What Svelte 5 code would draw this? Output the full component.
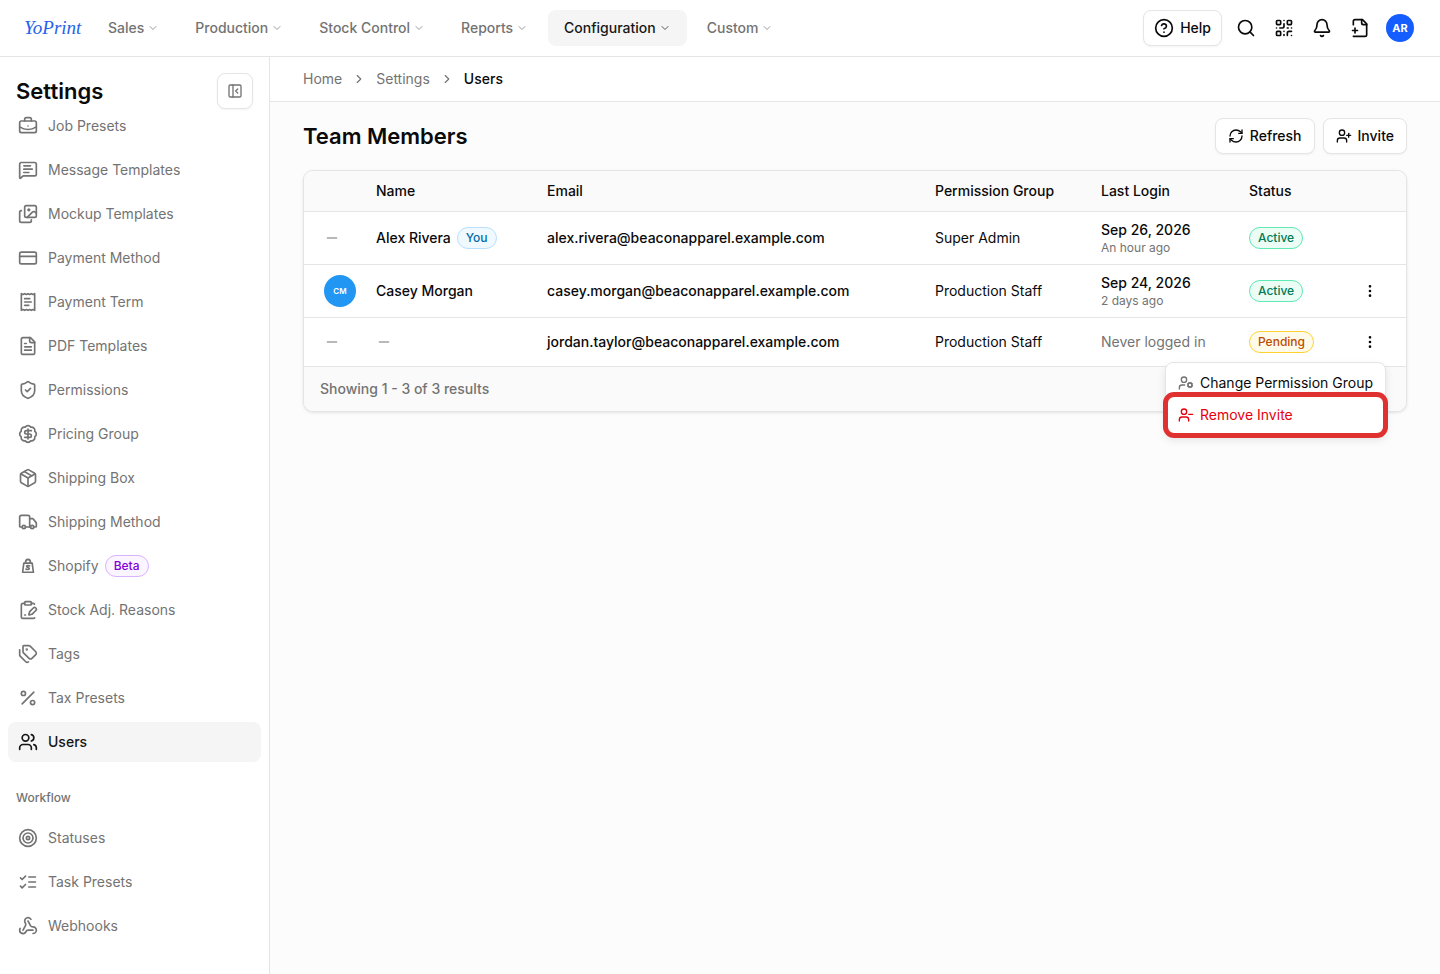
<script>
  // 24x24 stroke icons
  const icons = {
    chevronDown: '<path d="m6 9 6 6 6-6"/>',
    chevronRight: '<path d="m9 18 6-6-6-6"/>',
    help: '<circle cx="12" cy="12" r="10"/><path d="M9.09 9a3 3 0 0 1 5.83 1c0 2-3 3-3 3"/><path d="M12 17h.01"/>',
    search: '<circle cx="11" cy="11" r="8"/><path d="m21 21-4.300-4.300"/>',
    qr: '<rect width="5" height="5" x="3" y="3" rx="1"/><rect width="5" height="5" x="16" y="3" rx="1"/><rect width="5" height="5" x="3" y="16" rx="1"/><path d="M21 16h-3a2 2 0 0 0-2 2v3"/><path d="M21 21v.01"/><path d="M12 7v3a2 2 0 0 1-2 2H7"/><path d="M3 12h.01"/><path d="M12 3h.01"/><path d="M12 16v.01"/><path d="M16 12h1"/><path d="M21 12v.01"/><path d="M12 21v-1"/>',
    bell: '<path d="M10.268 21a2 2 0 0 0 3.464 0"/><path d="M3.262 15.326A1 1 0 0 0 4 17h16a1 1 0 0 0 .74-1.673C19.41 13.956 18 12.499 18 8A6 6 0 0 0 6 8c0 4.499-1.411 5.956-2.738 7.326"/>',
    filePlus: '<path d="M4 22h14a2 2 0 0 0 2-2V7l-5-5H6a2 2 0 0 0-2 2v4"/><path d="M14 2v4a2 2 0 0 0 2 2h4"/><path d="M3 15h6"/><path d="M6 12v6"/>',
    panel: '<rect width="18" height="18" x="3" y="3" rx="2"/><path d="M9 3v18"/><path d="m16 15-3-3 3-3"/>',
    briefcase: '<path d="M12 12h.01"/><path d="M16 6V4a2 2 0 0 0-2-2h-4a2 2 0 0 0-2 2v2"/><path d="M22 13a18.15 18.15 0 0 1-20 0"/><rect width="20" height="14" x="2" y="6" rx="2"/>',
    message: '<path d="M22 17a2 2 0 0 1-2 2H6.828a2 2 0 0 0-1.414.586l-2.202 2.202A.71.71 0 0 1 2 21.286V5a2 2 0 0 1 2-2h16a2 2 0 0 1 2 2z"/><path d="M7 11h10"/><path d="M7 15h6"/><path d="M7 7h8"/>',
    images: '<path d="M16 19v1a2 2 0 0 1-2 2H4a2 2 0 0 1-2-2V10a2 2 0 0 1 2-2"/><rect width="14" height="14" x="8" y="2" rx="2"/><circle cx="13" cy="7" r="1"/><path d="m22 11-1.296-1.296a2.400 2.400 0 0 0-3.408 0L11 16"/>',
    card: '<rect width="20" height="14" x="2" y="5" rx="2"/><path d="M2 10h20"/>',
    receipt: '<path d="M4 2v20l2-1 2 1 2-1 2 1 2-1 2 1 2-1 2 1V2l-2 1-2-1-2 1-2-1-2 1-2-1-2 1Z"/><path d="M14 8H8"/><path d="M16 12H8"/><path d="M13 16H8"/>',
    fileText: '<path d="M15 2H6a2 2 0 0 0-2 2v16a2 2 0 0 0 2 2h12a2 2 0 0 0 2-2V7Z"/><path d="M14 2v4a2 2 0 0 0 2 2h4"/><path d="M10 9H8"/><path d="M16 13H8"/><path d="M16 17H8"/>',
    shield: '<path d="M20 13c0 5-3.500 7.500-7.660 8.950a1 1 0 0 1-.67-.01C7.500 20.500 4 18 4 13V6a1 1 0 0 1 1-1c2 0 4.500-1.200 6.240-2.720a1.170 1.170 0 0 1 1.520 0C14.510 3.810 17 5 19 5a1 1 0 0 1 1 1z"/><path d="m9 12 2 2 4-4"/>',
    badgeDollar: '<path d="M3.850 8.620a4 4 0 0 1 4.780-4.770 4 4 0 0 1 6.740 0 4 4 0 0 1 4.780 4.780 4 4 0 0 1 0 6.740 4 4 0 0 1-4.770 4.780 4 4 0 0 1-6.750 0 4 4 0 0 1-4.780-4.770 4 4 0 0 1 0-6.760Z"/><path d="M16 8h-6a2 2 0 1 0 0 4h4a2 2 0 1 1 0 4H8"/><path d="M12 18V6"/>',
    box: '<path d="M11 21.730a2 2 0 0 0 2 0l7-4A2 2 0 0 0 21 16V8a2 2 0 0 0-1-1.730l-7-4a2 2 0 0 0-2 0l-7 4A2 2 0 0 0 3 8v8a2 2 0 0 0 1 1.730z"/><path d="M12 22V12"/><path d="m3.300 7 8.700 5 8.700-5"/><path d="m7.500 4.270 9 5.150"/>',
    truck: '<path d="M14 18V6a2 2 0 0 0-2-2H4a2 2 0 0 0-2 2v11a1 1 0 0 0 1 1h2"/><path d="M15 18H9"/><path d="M19 18h2a1 1 0 0 0 1-1v-3.650a1 1 0 0 0-.22-.624l-3.480-4.350A1 1 0 0 0 17.520 8H14"/><circle cx="17" cy="18" r="2"/><circle cx="7" cy="18" r="2"/>',
    shopify: '<path d="M7 8.500h10l1.500 11h-13Z"/><path d="M9 8c0-3 1.500-4 3-4s3 1 3 4"/><path d="M14 12c-2-1-4-.5-3.500.8s3 .8 3 2.200-2.500 1.500-4 .7"/>',
    clipboardPen: '<rect width="8" height="4" x="8" y="2" rx="1"/><path d="M8 4H6a2 2 0 0 0-2 2v14a2 2 0 0 0 2 2h12a2 2 0 0 0 2-.5"/><path d="M16 4h2a2 2 0 0 1 1.730 1"/><path d="M8 18h1"/><path d="M21.378 12.626a1 1 0 0 0-3.004-3.004l-4.010 4.012a2 2 0 0 0-.506.854l-.837 2.870a.5.5 0 0 0 .62.62l2.870-.837a2 2 0 0 0 .854-.506z"/>',
    tags: '<path d="M13.172 2a2 2 0 0 1 1.414.586l6.710 6.710a2.400 2.400 0 0 1 0 3.408l-4.592 4.592a2.400 2.400 0 0 1-3.408 0l-6.710-6.710A2 2 0 0 1 6 9.172V3a1 1 0 0 1 1-1z"/><path d="M2 7v6.172a2 2 0 0 0 .586 1.414l6.710 6.710a2.400 2.400 0 0 0 3.191.193"/><circle cx="10.500" cy="6.500" r=".5" fill="currentColor"/>',
    percent: '<path d="M19 5 5 19"/><circle cx="6.500" cy="6.500" r="2.500"/><circle cx="17.500" cy="17.500" r="2.500"/>',
    users: '<path d="M16 21v-2a4 4 0 0 0-4-4H6a4 4 0 0 0-4 4v2"/><circle cx="9" cy="7" r="4"/><path d="M22 21v-2a4 4 0 0 0-3-3.870"/><path d="M16 3.130a4 4 0 0 1 0 7.750"/>',
    target: '<circle cx="12" cy="12" r="10"/><circle cx="12" cy="12" r="6"/><circle cx="12" cy="12" r="2"/>',
    tasks: '<path d="m3 17 2 2 4-4"/><path d="m3 7 2 2 4-4"/><path d="M13 6h8"/><path d="M13 12h8"/><path d="M13 18h8"/>',
    webhook: '<path d="M18 16.980h-5.990c-1.100 0-1.950.94-2.480 1.900A4 4 0 0 1 2 17c.01-.7.200-1.400.57-2"/><path d="m6 17 3.130-5.780c.53-.97.100-2.180-.5-3.100a4 4 0 1 1 6.890-4.060"/><path d="m12 6 3.130 5.730C15.660 12.700 16.900 13 18 13a4 4 0 0 1 0 8"/>',
    refresh: '<path d="M3 12a9 9 0 0 1 9-9 9.750 9.750 0 0 1 6.740 2.740L21 8"/><path d="M21 3v5h-5"/><path d="M21 12a9 9 0 0 1-9 9 9.750 9.750 0 0 1-6.740-2.740L3 16"/><path d="M8 16H3v5"/>',
    userPlus: '<path d="M16 21v-2a4 4 0 0 0-4-4H6a4 4 0 0 0-4 4v2"/><circle cx="9" cy="7" r="4"/><path d="M19 8v6"/><path d="M22 11h-6"/>',
    userMinus: '<path d="M16 21v-2a4 4 0 0 0-4-4H6a4 4 0 0 0-4 4v2"/><circle cx="9" cy="7" r="4"/><path d="M22 11h-6"/>',
    userCog: '<path d="M10 15H6a4 4 0 0 0-4 4v2"/><circle cx="9" cy="7" r="4"/><circle cx="18" cy="15" r="3"/><path d="m14.305 16.530.923-.382"/><path d="m15.228 13.852-.923-.383"/><path d="m16.852 12.228-.383-.923"/><path d="m16.852 17.772-.383.924"/><path d="m19.148 12.228.383-.923"/><path d="m19.530 18.696-.382-.924"/><path d="m20.772 13.852.924-.383"/><path d="m20.772 16.148.924.383"/>',
    minus: '<path d="M5 12h14"/>',
    more: '<circle cx="12" cy="12" r="1"/><circle cx="12" cy="5" r="1"/><circle cx="12" cy="19" r="1"/>',
  };

  const menus = ['Sales', 'Production', 'Stock Control', 'Reports', 'Configuration', 'Custom'];
  const tools = [
    ['search', 'Search'],
    ['qr', 'Scan code'],
    ['bell', 'Notifications'],
    ['filePlus', 'New document'],
  ];

  const settings = [
    { icon: 'briefcase', label: 'Job Presets' },
    { icon: 'message', label: 'Message Templates' },
    { icon: 'images', label: 'Mockup Templates' },
    { icon: 'card', label: 'Payment Method' },
    { icon: 'receipt', label: 'Payment Term' },
    { icon: 'fileText', label: 'PDF Templates' },
    { icon: 'shield', label: 'Permissions' },
    { icon: 'badgeDollar', label: 'Pricing Group' },
    { icon: 'box', label: 'Shipping Box' },
    { icon: 'truck', label: 'Shipping Method' },
    { icon: 'shopify', label: 'Shopify', badge: 'Beta' },
    { icon: 'clipboardPen', label: 'Stock Adj. Reasons' },
    { icon: 'tags', label: 'Tags' },
    { icon: 'percent', label: 'Tax Presets' },
    { icon: 'users', label: 'Users' },
  ];
  const workflow = [
    { icon: 'target', label: 'Statuses' },
    { icon: 'tasks', label: 'Task Presets' },
    { icon: 'webhook', label: 'Webhooks' },
  ];

  const members = [
    { name: 'Alex Rivera', you: true, email: 'alex.rivera@beaconapparel.example.com', group: 'Super Admin', login: 'Sep 26, 2026', ago: 'An hour ago', status: 'Active' },
    { name: 'Casey Morgan', initials: 'CM', email: 'casey.morgan@beaconapparel.example.com', group: 'Production Staff', login: 'Sep 24, 2026', ago: '2 days ago', status: 'Active' },
    { email: 'jordan.taylor@beaconapparel.example.com', group: 'Production Staff', status: 'Pending' },
  ];

  let current = $state('Users');
  let openMenu = $state(2);

  function toggle(i) {
    openMenu = openMenu === i ? -1 : i;
  }
</script>

{#snippet icon(name, size)}
  <svg class="icon" width={size} height={size} viewBox="0 0 24 24" aria-hidden="true">{@html icons[name]}</svg>
{/snippet}

{#snippet links(items)}
  {#each items as item}
    <a href="#settings" class:current={item.label === current} onclick={() => { current = item.label }}>
      {@render icon(item.icon, 20)}
      {item.label}
      {#if item.badge}<span class="badge beta">{item.badge}</span>{/if}
    </a>
  {/each}
{/snippet}

<header class="topbar">
  <a class="logo" href="#home">YoPrint</a>
  <nav class="menus">
    {#each menus as menu}
      <button class:selected={menu === 'Configuration'}>{menu}{@render icon('chevronDown', 12)}</button>
    {/each}
  </nav>
  <div class="tools">
    <button class="outline help">{@render icon('help', 20)}Help</button>
    {#each tools as [name, label]}
      <button class="tool" aria-label={label}>{@render icon(name, 20)}</button>
    {/each}
    <button class="account"><span>AR</span></button>
  </div>
</header>

<div class="layout">
  <aside>
    <div class="aside-head">
      <h2>Settings</h2>
      <button class="outline collapse" aria-label="Collapse sidebar">{@render icon('panel', 16)}</button>
    </div>
    <nav class="links">{@render links(settings)}</nav>
    <h3>Workflow</h3>
    <nav class="links">{@render links(workflow)}</nav>
  </aside>

  <main>
    <nav class="crumbs" aria-label="Breadcrumb">
      <a href="#home">Home</a>
      {@render icon('chevronRight', 14)}
      <a href="#settings">Settings</a>
      {@render icon('chevronRight', 14)}
      <span>Users</span>
    </nav>

    <section>
      <div class="title">
        <h1>Team Members</h1>
        <button class="outline">{@render icon('refresh', 16)}Refresh</button>
        <button class="outline">{@render icon('userPlus', 16)}Invite</button>
      </div>

      <div class="card">
        <table>
          <colgroup>
            <col class="c-avatar" /><col class="c-name" /><col /><col class="c-group" />
            <col class="c-login" /><col class="c-status" /><col class="c-actions" />
          </colgroup>
          <thead>
            <tr>
              <th></th>
              <th>Name</th>
              <th>Email</th>
              <th>Permission Group</th>
              <th>Last Login</th>
              <th>Status</th>
              <th></th>
            </tr>
          </thead>
          <tbody>
            {#each members as m, i}
              <tr>
                <td class="face">
                  {#if m.initials}<span class="avatar">{m.initials}</span>{:else}{@render icon('minus', 16)}{/if}
                </td>
                <td class="strong">
                  {#if m.name}
                    <div class="name">{m.name}{#if m.you}<span class="badge you">You</span>{/if}</div>
                  {:else}
                    {@render icon('minus', 16)}
                  {/if}
                </td>
                <td class="strong">{m.email}</td>
                <td>{m.group}</td>
                <td>
                  {#if m.login}
                    <div class="strong">{m.login}</div>
                    <div class="ago">{m.ago}</div>
                  {:else}
                    <span class="never">Never logged in</span>
                  {/if}
                </td>
                <td><span class="badge {m.status.toLowerCase()}">{m.status}</span></td>
                <td class="actions">
                  {#if !m.you}
                    <button class="more" aria-label="Actions" onclick={() => toggle(i)}>{@render icon('more', 16)}</button>
                    {#if openMenu === i}
                      <div class="dropdown" role="menu">
                        <button role="menuitem">{@render icon('userCog', 16)}Change Permission Group</button>
                        <button role="menuitem" class="remove">{@render icon('userMinus', 16)}Remove Invite</button>
                      </div>
                    {/if}
                  {/if}
                </td>
              </tr>
            {/each}
          </tbody>
        </table>
        <div class="results">Showing 1 - 3 of 3 results</div>
      </div>
    </section>
  </main>
</div>

<style>
  :global(body) {
    background: #fff;
    color: #0a0a0a;
    font: 14px/20px Inter, "Liberation Sans", sans-serif;
  }
  a {
    color: inherit;
    text-decoration: none;
  }
  button {
    display: flex;
    align-items: center;
    border: 0;
    padding: 0;
    background: none;
    color: inherit;
    font: inherit;
    cursor: pointer;
  }
  h1, h2, h3 {
    margin: 0;
  }
  h1, h2 {
    font-size: 22px;
    line-height: 36px;
    font-weight: 600;
  }
  .icon {
    display: block;
    flex: none;
    fill: none;
    stroke: currentColor;
    stroke-width: 2;
    stroke-linecap: round;
    stroke-linejoin: round;
  }
  .outline {
    box-sizing: border-box;
    height: 36px;
    padding: 0 12px;
    gap: 6px;
    border: 1px solid #e5e5e5;
    border-radius: 8px;
    background: #fff;
    font-weight: 500;
    box-shadow: 0 1px 2px rgba(0, 0, 0, 0.05);
  }

  .topbar {
    display: flex;
    align-items: center;
    height: 56px;
    padding: 0 24px;
    border-bottom: 1px solid #e5e5e5;
  }
  .logo {
    width: 68px;
    color: #2563eb;
    font: italic 19px/36px "Liberation Serif", serif;
  }
  .menus {
    display: flex;
    gap: 4px;
  }
  .menus button {
    height: 36px;
    padding: 0 16px;
    gap: 3px;
    border-radius: 8px;
    color: #737373;
    font-weight: 500;
  }
  .menus .icon {
    opacity: 0.7;
  }
  .menus .selected {
    background: #f5f5f5;
    color: #171717;
  }
  .tools {
    display: flex;
    align-items: center;
    gap: 10px;
    margin-left: auto;
  }
  .help {
    padding: 0 10px;
  }
  .tool {
    width: 28px;
    height: 28px;
    justify-content: center;
  }
  .account {
    width: 32px;
    justify-content: center;
  }
  .account span {
    width: 28px;
    border-radius: 50%;
    background: #155dfc;
    color: #fff;
    font-size: 11px;
    font-weight: 700;
    line-height: 28px;
    text-align: center;
  }

  .layout {
    display: flex;
    min-height: calc(100vh - 57px);
  }
  aside {
    flex: none;
    width: 269px;
    border-right: 1px solid #e5e5e5;
  }
  .aside-head {
    display: flex;
    justify-content: space-between;
    box-sizing: border-box;
    height: 49px;
    padding: 16px 16px 0;
  }
  .collapse {
    width: 36px;
    padding: 0;
    justify-content: center;
    color: #737373;
  }
  .links {
    display: flex;
    flex-direction: column;
    gap: 4px;
    padding: 0 8px;
  }
  .links a {
    display: flex;
    align-items: center;
    gap: 10px;
    height: 40px;
    padding: 0 10px;
    border-radius: 8px;
    color: #737373;
  }
  .links .current {
    background: #f5f5f5;
    color: #171717;
    font-weight: 500;
  }
  h3 {
    margin: 28px 16px 12px;
    color: #737373;
    font-size: 12px;
    line-height: 16px;
    font-weight: 500;
  }

  main {
    flex: 1;
    min-width: 0;
    background: #fcfcfc;
  }
  .crumbs {
    display: flex;
    align-items: center;
    gap: 10px;
    height: 44px;
    padding: 0 33px;
    border-bottom: 1px solid #e5e5e5;
    background: #fff;
    color: #737373;
  }
  .crumbs span {
    color: #0a0a0a;
    font-weight: 500;
  }
  section {
    padding: 16px 33px;
  }
  .title {
    display: flex;
    gap: 8px;
    margin-bottom: 16px;
  }
  .title h1 {
    flex: 1;
  }

  .card {
    border: 1px solid #e5e5e5;
    border-radius: 10px;
    background: #fff;
    box-shadow: 0 1px 3px rgba(0, 0, 0, 0.1);
  }
  table {
    width: 100%;
    border-collapse: separate;
    border-spacing: 0;
    table-layout: fixed;
  }
  .c-avatar { width: 56px; }
  .c-name { width: 171px; }
  .c-group { width: 166px; }
  .c-login { width: 148px; }
  .c-status { width: 121px; }
  .c-actions { width: 52px; }
  th, td {
    padding: 8px 0 8px 16px;
    border-bottom: 1px solid #e5e5e5;
    text-align: left;
  }
  th {
    padding: 10px 0 10px 16px;
    background: #fafafa;
    font-weight: 500;
  }
  th:first-child {
    border-top-left-radius: 9px;
  }
  th:last-child {
    border-top-right-radius: 9px;
  }
  td .icon {
    color: #a1a1a1;
  }
  .strong {
    font-weight: 500;
  }
  .face {
    padding-left: 20px;
  }
  .avatar {
    display: block;
    width: 32px;
    border-radius: 50%;
    background: #2196f3;
    color: #fff;
    font-size: 8px;
    font-weight: 600;
    line-height: 32px;
    text-align: center;
  }
  .name {
    display: flex;
    align-items: center;
    gap: 6px;
  }
  .ago {
    color: #737373;
    font-size: 12px;
    line-height: 16px;
  }
  .never {
    color: #737373;
  }
  .badge {
    display: inline-block;
    padding: 2px 8px;
    border: 1px solid;
    border-radius: 11px;
    font-size: 12px;
    line-height: 16px;
    font-weight: 500;
  }
  .links .badge {
    margin-left: -4px;
  }
  .beta {
    border-color: #dab2ff;
    background: #faf5ff;
    color: #8200db;
  }
  .you {
    border-color: #b8e0fe;
    background: #f0f9ff;
    color: #0069a8;
  }
  .active {
    border-color: #5ee9b5;
    background: #ecfdf5;
    color: #007a55;
  }
  .pending {
    border-color: #ffd230;
    background: #fffbeb;
    color: #bb4d00;
  }
  .actions {
    position: relative;
    padding-left: 0;
  }
  .more {
    width: 32px;
    height: 32px;
    justify-content: center;
  }
  .more .icon {
    color: #0a0a0a;
  }
  .dropdown {
    position: absolute;
    top: 44px;
    right: 20px;
    padding: 4px;
    border: 1px solid #e5e5e5;
    border-radius: 8px;
    background: #fff;
    box-shadow: 0 4px 8px rgba(0, 0, 0, 0.1);
  }
  .dropdown button {
    width: 100%;
    height: 32px;
    padding: 0 8px;
    gap: 6px;
    white-space: nowrap;
  }
  .dropdown .icon {
    color: #737373;
  }
  .dropdown .remove {
    border-radius: 4px;
    outline: 5px solid #e03131;
    outline-offset: 2px;
    color: #e7000b;
  }
  .dropdown .remove .icon {
    color: #e7000b;
  }
  .results {
    padding: 12px 16px;
    border-radius: 0 0 9px 9px;
    background: #fafafa;
    color: #737373;
    font-weight: 500;
  }
</style>
